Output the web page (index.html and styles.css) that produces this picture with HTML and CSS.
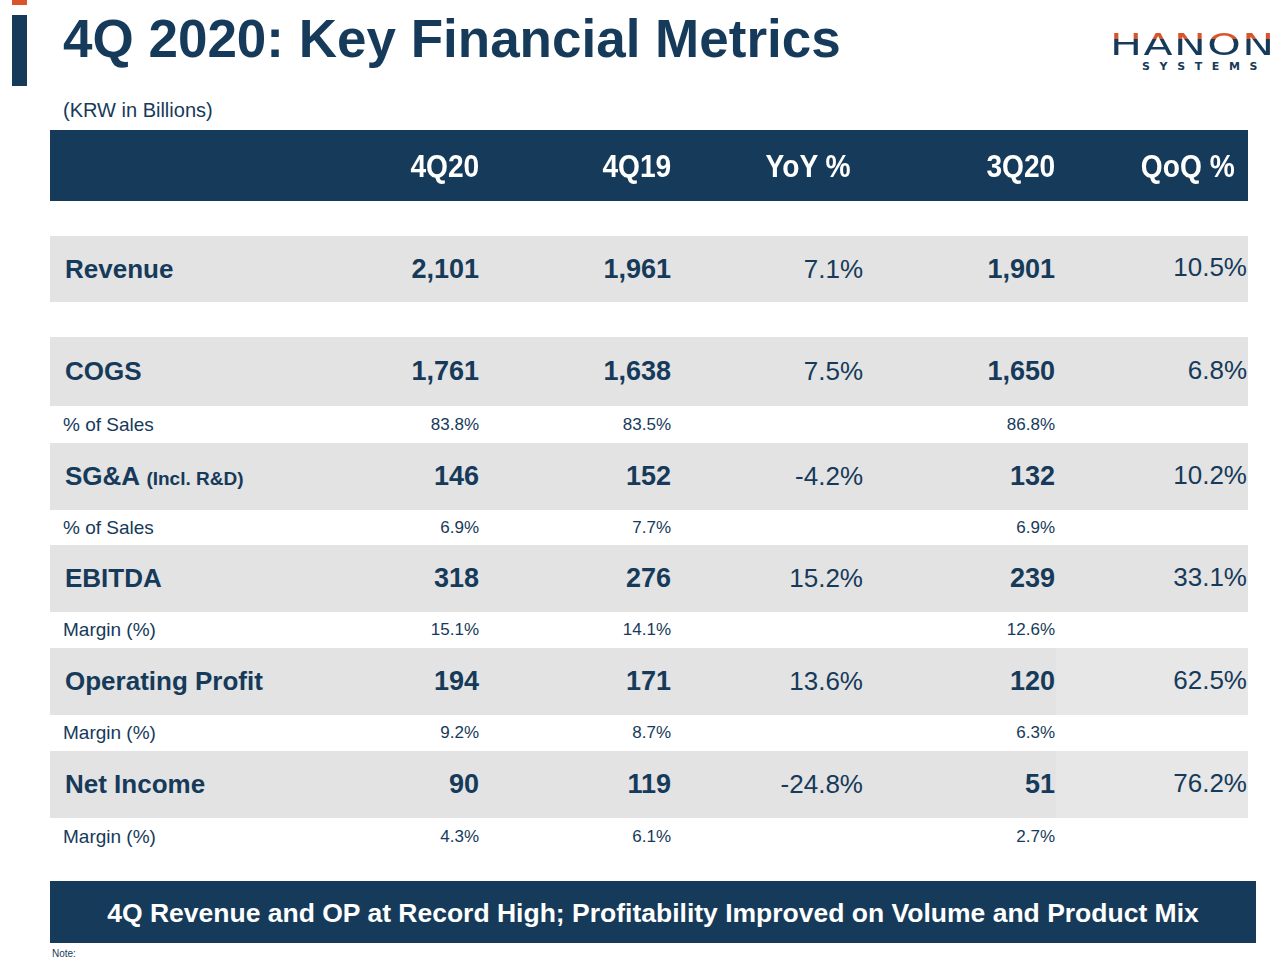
FILE: index.html
```html
<!DOCTYPE html>
<html lang="en">
<head>
<meta charset="utf-8">
<title>4Q 2020: Key Financial Metrics</title>
<link rel="stylesheet" href="styles.css">
</head>
<body>
<div class="slide">
  <header class="top">
    <div class="accent">
      <span class="accent-orange"></span>
      <span class="accent-bar"></span>
    </div>
    <div class="titles">
      <h1 class="title">4Q 2020: Key Financial Metrics</h1>
      <p class="unit">(KRW in Billions)</p>
    </div>
    <div class="logo">
      <span class="logo-word">HANON</span>
      <span class="logo-sub">SYSTEMS</span>
    </div>
  </header>

  <table class="metrics">
    <colgroup>
      <col class="c-label"><col class="c-num"><col class="c-num"><col class="c-num"><col class="c-num"><col class="c-num">
    </colgroup>
    <thead>
      <tr class="head">
        <th></th>
        <th><span class="hd">4Q20</span></th>
        <th><span class="hd">4Q19</span></th>
        <th class="pct"><span class="hd">YoY %</span></th>
        <th><span class="hd">3Q20</span></th>
        <th class="pct"><span class="hd">QoQ %</span></th>
      </tr>
    </thead>
    <tbody>
      <tr class="spacer"><td colspan="6"></td></tr>
      <tr class="main h66">
        <td class="label">Revenue</td>
        <td class="num">2,101</td><td class="num">1,961</td><td class="chg">7.1%</td><td class="num">1,901</td><td class="qoq">10.5%</td>
      </tr>
      <tr class="spacer"><td colspan="6"></td></tr>
      <tr class="main h69">
        <td class="label">COGS</td>
        <td class="num">1,761</td><td class="num">1,638</td><td class="chg">7.5%</td><td class="num">1,650</td><td class="qoq">6.8%</td>
      </tr>
      <tr class="sub h37">
        <td class="sublabel">% of Sales</td>
        <td class="subnum">83.8%</td><td class="subnum">83.5%</td><td></td><td class="subnum">86.8%</td><td></td>
      </tr>
      <tr class="main h67">
        <td class="label">SG&amp;A <span class="small">(Incl. R&amp;D)</span></td>
        <td class="num">146</td><td class="num">152</td><td class="chg">-4.2%</td><td class="num">132</td><td class="qoq">10.2%</td>
      </tr>
      <tr class="sub h35">
        <td class="sublabel">% of Sales</td>
        <td class="subnum">6.9%</td><td class="subnum">7.7%</td><td></td><td class="subnum">6.9%</td><td></td>
      </tr>
      <tr class="main h67">
        <td class="label">EBITDA</td>
        <td class="num">318</td><td class="num">276</td><td class="chg">15.2%</td><td class="num">239</td><td class="qoq">33.1%</td>
      </tr>
      <tr class="sub h36">
        <td class="sublabel">Margin (%)</td>
        <td class="subnum">15.1%</td><td class="subnum">14.1%</td><td></td><td class="subnum">12.6%</td><td></td>
      </tr>
      <tr class="main h67">
        <td class="label">Operating Profit</td>
        <td class="num">194</td><td class="num">171</td><td class="chg">13.6%</td><td class="num">120</td><td class="qoq light">62.5%</td>
      </tr>
      <tr class="sub h36">
        <td class="sublabel">Margin (%)</td>
        <td class="subnum">9.2%</td><td class="subnum">8.7%</td><td></td><td class="subnum">6.3%</td><td></td>
      </tr>
      <tr class="main h67">
        <td class="label">Net Income</td>
        <td class="num">90</td><td class="num">119</td><td class="chg">-24.8%</td><td class="num">51</td><td class="qoq light">76.2%</td>
      </tr>
      <tr class="sub h37">
        <td class="sublabel">Margin (%)</td>
        <td class="subnum">4.3%</td><td class="subnum">6.1%</td><td></td><td class="subnum">2.7%</td><td></td>
      </tr>
    </tbody>
  </table>

  <div class="banner">4Q Revenue and OP at Record High; Profitability Improved on Volume and Product Mix</div>
  <p class="note">Note:</p>
</div>
</body>
</html>
```

FILE: styles.css
```css
* { box-sizing: border-box; }

html, body {
  margin: 0;
  padding: 0;
  background: #ffffff;
}

body {
  font-family: "Liberation Sans", Arial, sans-serif;
  color: #163a5a;
  overflow: hidden;
}

.slide {
  width: 1282px;
  height: 960px;
  overflow: hidden;
}

/* ---------- header ---------- */
.top {
  display: flex;
  align-items: flex-start;
  height: 130px;
  padding-left: 12px;
}

.accent {
  display: flex;
  flex-direction: column;
  width: 15px;
  flex: none;
}

.accent-orange {
  display: block;
  height: 5px;
  background: #d9532b;
}

.accent-bar {
  display: block;
  height: 71px;
  margin-top: 10px;
  background: #163a5a;
}

.titles {
  margin-left: 36px;
}

.title {
  margin: 12px 0 0;
  font-size: 53px;
  line-height: 53px;
  font-weight: 700;
  color: #163a5a;
  white-space: nowrap;
}

.unit {
  margin: 35px 0 0;
  font-size: 20px;
  line-height: 20px;
  color: #163a5a;
}

.logo {
  margin-left: auto;
  margin-right: 7px;
  margin-top: 30px;
  display: flex;
  flex-direction: column;
  align-items: flex-end;
}

.logo-word {
  display: block;
  font-family: "DejaVu Sans", sans-serif;
  font-weight: 400;
  font-size: 30px;
  line-height: 30px;
  letter-spacing: 1px;
  transform: scaleX(1.42) scaleY(0.98);
  transform-origin: right center;
  margin-right: -1px;
  background: linear-gradient(to bottom, #d9532b 0, #d9532b 31%, #163a5a 31%, #163a5a 100%);
  -webkit-background-clip: text;
  background-clip: text;
  color: transparent;
}

.logo-sub {
  display: block;
  margin-top: 0;
  margin-right: 8px;
  font-family: "DejaVu Sans", sans-serif;
  font-weight: 700;
  font-size: 11px;
  line-height: 13px;
  letter-spacing: 9.6px;
  color: #163a5a;
}

/* ---------- table ---------- */
.metrics {
  margin-left: 50px;
  width: 1198px;
  table-layout: fixed;
  border-collapse: collapse;
  border-spacing: 0;
}

.c-label { width: 238px; }
.c-num { width: 192px; }

.metrics td, .metrics th {
  padding: 0;
  white-space: nowrap;
}

.head {
  height: 71px;
  background: #163a5a;
}

.head th {
  color: #ffffff;
  font-weight: 700;
  font-size: 32px;
  text-align: right;
  vertical-align: middle;
  padding-right: 1px;
  padding-top: 2px;
}

.hd {
  display: inline-block;
  transform: scaleX(0.88);
  transform-origin: right center;
}

.head th.pct { padding-right: 13px; }

.spacer { height: 35px; }

.main {
  background: #e3e3e3;
}

.h66 { height: 66px; }
.h67 { height: 67px; }
.h69 { height: 69px; }
.h35 { height: 35px; }
.h36 { height: 36px; }
.h37 { height: 37px; }

.main td {
  font-size: 26px;
  vertical-align: middle;
}

.label {
  padding-left: 15px !important;
  font-weight: 700;
  text-align: left;
}

.label .small {
  font-size: 19px;
}

.num {
  font-weight: 700;
  font-size: 27px !important;
  text-align: right;
  padding-right: 1px !important;
}

.chg {
  text-align: right;
  padding-right: 1px !important;
}

.qoq {
  text-align: right;
  padding-right: 1px !important;
  padding-bottom: 3px !important;
}

.qoq.light {
  background: #e7e7e7;
}

.sub td {
  vertical-align: middle;
}

.sublabel {
  padding-left: 13px !important;
  font-size: 19px;
  text-align: left;
}

.subnum {
  font-size: 17px;
  text-align: right;
  padding-right: 1px !important;
}

/* ---------- banner ---------- */
.banner {
  margin: 26px 0 0 50px;
  width: 1206px;
  height: 62px;
  background: #163a5a;
  color: #ffffff;
  font-weight: 700;
  font-size: 26.5px;
  display: flex;
  align-items: center;
  justify-content: center;
  white-space: nowrap;
  padding-top: 2px;
}

.note {
  margin: 5px 0 0 52px;
  font-size: 10px;
  line-height: 11px;
  color: #163a5a;
}
```
